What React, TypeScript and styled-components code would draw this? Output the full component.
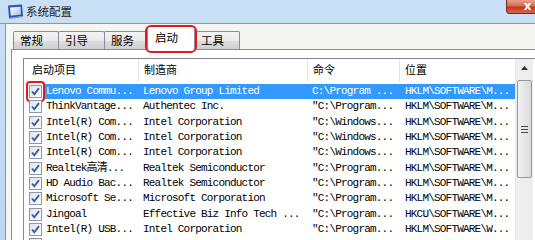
import React from "react";
import styled, { createGlobalStyle, css } from "styled-components";

const GlobalStyle = createGlobalStyle`
    html, body {
        margin: 0;
        padding: 0;
        background: #c4dcf3;
    }
`;

interface StartupItem {
    name: string;
    maker: string;
    command: string;
    location: string;
}

const items: StartupItem[] = [
    { name: "Lenovo Commu...", maker: "Lenovo Group Limited", command: "C:\\Program ...", location: "HKLM\\SOFTWARE\\M..." },
    { name: "ThinkVantage...", maker: "Authentec Inc.", command: "\"C:\\Program...", location: "HKLM\\SOFTWARE\\M..." },
    { name: "Intel(R) Com...", maker: "Intel Corporation", command: "\"C:\\Windows...", location: "HKLM\\SOFTWARE\\M..." },
    { name: "Intel(R) Com...", maker: "Intel Corporation", command: "\"C:\\Windows...", location: "HKLM\\SOFTWARE\\M..." },
    { name: "Intel(R) Com...", maker: "Intel Corporation", command: "\"C:\\Windows...", location: "HKLM\\SOFTWARE\\M..." },
    { name: "Realtek高清...", maker: "Realtek Semiconductor", command: "\"C:\\Program...", location: "HKLM\\SOFTWARE\\M..." },
    { name: "HD Audio Bac...", maker: "Realtek Semiconductor", command: "\"C:\\Program...", location: "HKLM\\SOFTWARE\\M..." },
    { name: "Microsoft Se...", maker: "Microsoft Corporation", command: "\"C:\\Program...", location: "HKLM\\SOFTWARE\\M..." },
    { name: "Jingoal", maker: "Effective Biz Info Tech ...", command: "\"C:\\Program...", location: "HKCU\\SOFTWARE\\M..." },
    { name: "Intel(R) USB...", maker: "Intel Corporation", command: "\"C:\\Program...", location: "HKLM\\SOFTWARE\\W..." },
    // last row is scrolled mostly out of view: only its checkbox edge shows
    { name: "", maker: "", command: "", location: "" },
];

const tabs = ["常规", "引导", "服务", "启动", "工具"];
const tabWidths = [46, 47, 44, 48, 46];
const ACTIVE_TAB = 3;

const App: React.FC = () => {
    return (
        <>
            <GlobalStyle />
            <Window>
                <TitleBar>
                    <TitleIcon />
                    <Title>系统配置</Title>
                    <CloseButton>
                        <CloseGlyph>x</CloseGlyph>
                    </CloseButton>
                </TitleBar>
                <Client>
                    <TabStrip>
                        {tabs.map((t, i) => (
                            <Tab key={t} active={i === ACTIVE_TAB} style={{ width: tabWidths[i] }}>
                                {t}
                                {i === ACTIVE_TAB && <Highlight />}
                            </Tab>
                        ))}
                    </TabStrip>
                    <Panel>
                        <ListBox>
                            <ListMain>
                                <Header>
                                    <HeaderCell width={114} first>启动项目</HeaderCell>
                                    <HeaderCell width={169}>制造商</HeaderCell>
                                    <HeaderCell width={92}>命令</HeaderCell>
                                    <HeaderCell width={116}>位置</HeaderCell>
                                </Header>
                                <Rows>
                                    {items.map((item, i) => (
                                        <Row key={i}>
                                            <CheckCell>
                                                <CheckBox />
                                                {i === 0 && <CheckHighlight />}
                                            </CheckCell>
                                            <RowBody selected={i === 0}>
                                                <Cell width={95} pad={3}>{item.name}</Cell>
                                                <Cell width={169} pad={5}>{item.maker}</Cell>
                                                <Cell width={92} pad={5}>{item.command}</Cell>
                                                <Cell width={116} pad={6}>{item.location}</Cell>
                                            </RowBody>
                                        </Row>
                                    ))}
                                </Rows>
                            </ListMain>
                            <ScrollBar>
                                <ScrollArrow>
                                    <svg width="7" height="4" viewBox="0 0 7 4">
                                        <path d="M0 4 L3.5 0 L7 4 Z" fill="#333" />
                                    </svg>
                                </ScrollArrow>
                                <Thumb>
                                    <Grip />
                                </Thumb>
                            </ScrollBar>
                        </ListBox>
                    </Panel>
                </Client>
            </Window>
        </>
    );
};

export default App;

const TitleIcon: React.FC = () => (
    <IconWrap>
        <svg width="17" height="15" viewBox="0 0 17 15">
            <defs>
                <linearGradient id="scr" x1="0" y1="0" x2="1" y2="1">
                    <stop offset="0" stopColor="#ffffff" />
                    <stop offset="1" stopColor="#9fc3ea" />
                </linearGradient>
            </defs>
            <path d="M1 1.5 L15 0.5 L16 12 L2 14 Z" fill="#2d54b8" />
            <path d="M3 3.5 L13.5 2.8 L14 10.5 L3.8 11.8 Z" fill="url(#scr)" />
            <path d="M2 14 L16 12 L16 13 L2.5 15 Z" fill="#8a8f99" />
        </svg>
    </IconWrap>
);

const CheckBox: React.FC = () => (
    <Box>
        <svg width="11" height="11" viewBox="0 0 11 11">
            <path d="M2 5.5 L4.3 8.3 L9 2.2" fill="none" stroke="#3d5aa6" strokeWidth="1.9" />
        </svg>
    </Box>
);

const Window = styled.div`
    width: 535px;
    height: 240px;
    overflow: hidden;
    display: flex;
    flex-direction: column;
    background: linear-gradient(180deg, #c9e0f5 0%, #bcd7f0 100%);
`;

const TitleBar = styled.div`
    height: 23px;
    flex-shrink: 0;
    display: flex;
    align-items: flex-start;
    border-bottom: 1px solid #8497ad;
    padding-left: 0;
`;

const IconWrap = styled.div`
    width: 17px;
    height: 15px;
    margin-top: 4px;
    margin-left: 7px;
`;

const Title = styled.div`
    font-family: "Noto Sans CJK SC", sans-serif;
    font-size: 11.5px;
    color: #1c1c1c;
    margin-left: 2px;
    line-height: 22px;
`;

const CloseButton = styled.div`
    margin-left: auto;
    margin-right: -14px;
    width: 43px;
    height: 14px;
    box-sizing: border-box;
    border: 1px solid #6b2a22;
    border-top: none;
    border-radius: 0 0 4px 4px;
    background: linear-gradient(180deg, #e9a08f 0%, #d66b52 45%, #c2371c 55%, #d9684a 100%);
    display: flex;
    justify-content: center;
    align-items: center;
`;

const CloseGlyph = styled.span`
    font-family: "DejaVu Sans", sans-serif;
    font-weight: bold;
    font-size: 12px;
    line-height: 12px;
    color: #ffffff;
    margin-top: -2px;
`;

const Client = styled.div`
    flex: 1;
    margin-left: 5px;
    border-left: 1px solid #8497ad;
    background: #f6f6f1;
    display: flex;
    flex-direction: column;
`;

const TabStrip = styled.div`
    height: 25px;
    flex-shrink: 0;
    display: flex;
    align-items: flex-end;
    padding-left: 7px;
    position: relative;
    z-index: 1;
`;

interface TabProps {
    active: boolean;
}

const Tab = styled.div<TabProps>`
    position: relative;
    box-sizing: border-box;
    height: 18px;
    margin-right: -1px;
    border: 1px solid #898c95;
    border-bottom: none;
    border-radius: 2px 2px 0 0;
    background: linear-gradient(180deg, #f3f3f3 0%, #ebebeb 50%, #dddddd 51%, #cfcfcf 100%);
    font-family: "Noto Sans CJK SC", sans-serif;
    font-size: 11.5px;
    color: #000;
    line-height: 17px;
    padding-left: 6px;
    ${(p) =>
        p.active &&
        css`
            height: 24px;
            margin-bottom: -1px;
            background: #ffffff;
            z-index: 2;
            line-height: 20px;
            padding-left: 7px;
        `}
`;

const Highlight = styled.div`
    position: absolute;
    left: -3px;
    top: -2px;
    right: -3px;
    bottom: -3px;
    border: 2.5px solid #e3191c;
    border-radius: 6px;
`;

const Panel = styled.div`
    flex: 1;
    margin-left: 5px;
    border-top: 1px solid #898c95;
    border-left: 1px solid #898c95;
    background: #ffffff;
    padding: 8px 0 0 11px;
    display: flex;
`;

const ListBox = styled.div`
    flex: 1;
    display: flex;
    border: 1px solid #828790;
    border-bottom: none;
    border-right: none;
    background: #ffffff;
    min-width: 0;
`;

const ListMain = styled.div`
    width: 491px;
    flex-shrink: 0;
    display: flex;
    flex-direction: column;
`;

const Header = styled.div`
    height: 22px;
    display: flex;
    flex-shrink: 0;
`;

interface HeaderCellProps {
    width: number;
    first?: boolean;
}

const HeaderCell = styled.div<HeaderCellProps>`
    width: ${(p) => p.width}px;
    flex-shrink: 0;
    box-sizing: border-box;
    border-left: ${(p) => (p.first ? "none" : "1px solid #e3e4e6")};
    padding-left: ${(p) => (p.first ? 8 : 5)}px;
    font-family: "Noto Sans CJK SC", sans-serif;
    font-size: 11px;
    color: #000;
    line-height: 21px;
    height: 23px;
`;

const Rows = styled.div`
    padding-top: 3px;
    display: flex;
    flex-direction: column;
`;

const Row = styled.div`
    height: 15.3px;
    display: flex;
    flex-shrink: 0;
`;

const CheckCell = styled.div`
    width: 19px;
    flex-shrink: 0;
    position: relative;
    display: flex;
    align-items: center;
    padding-left: 5px;
    box-sizing: border-box;
`;

const CheckHighlight = styled.div`
    position: absolute;
    left: 2px;
    top: -3px;
    width: 19px;
    height: 21px;
    box-sizing: border-box;
    border: 2.5px solid #e3191c;
    border-radius: 4px;
`;

const Box = styled.div`
    width: 13px;
    height: 13px;
    box-sizing: border-box;
    border: 1px solid #8e97ad;
    background: linear-gradient(135deg, #dde3ec 0%, #f4f6f9 60%, #ffffff 100%);
    display: flex;
    align-items: center;
    justify-content: center;
`;

interface RowBodyProps {
    selected: boolean;
}

const RowBody = styled.div<RowBodyProps>`
    display: flex;
    align-items: center;
    color: #000;
    ${(p) =>
        p.selected &&
        css`
            background: #3399ff;
            color: #ffffff;
        `}
`;

interface CellProps {
    width: number;
    pad: number;
}

const Cell = styled.div<CellProps>`
    width: ${(p) => p.width}px;
    flex-shrink: 0;
    box-sizing: border-box;
    padding-left: ${(p) => p.pad}px;
    white-space: nowrap;
    overflow: hidden;
    font-family: "Liberation Mono", "Noto Sans CJK SC", monospace;
    font-size: 11px;
    letter-spacing: -0.8px;
    line-height: 15px;
`;

const ScrollBar = styled.div`
    width: 17px;
    flex-shrink: 0;
    background: #eeeef0;
    border-left: 1px solid #e6e6e6;
    display: flex;
    flex-direction: column;
    align-items: center;
`;

const ScrollArrow = styled.div`
    height: 17px;
    width: 17px;
    display: flex;
    align-items: center;
    justify-content: center;
`;

const Thumb = styled.div`
    margin-top: 4px;
    width: 15px;
    height: 98px;
    box-sizing: border-box;
    border: 1px solid #979797;
    border-radius: 2px;
    background: linear-gradient(90deg, #f1f1f1 0%, #e6e6e6 50%, #d9d9d9 100%);
    display: flex;
    align-items: center;
    justify-content: center;
`;

const Grip = styled.div`
    width: 7px;
    height: 7px;
    background: repeating-linear-gradient(180deg, #4a4a4a 0px, #4a4a4a 1px, transparent 1px, transparent 3px);
`;
